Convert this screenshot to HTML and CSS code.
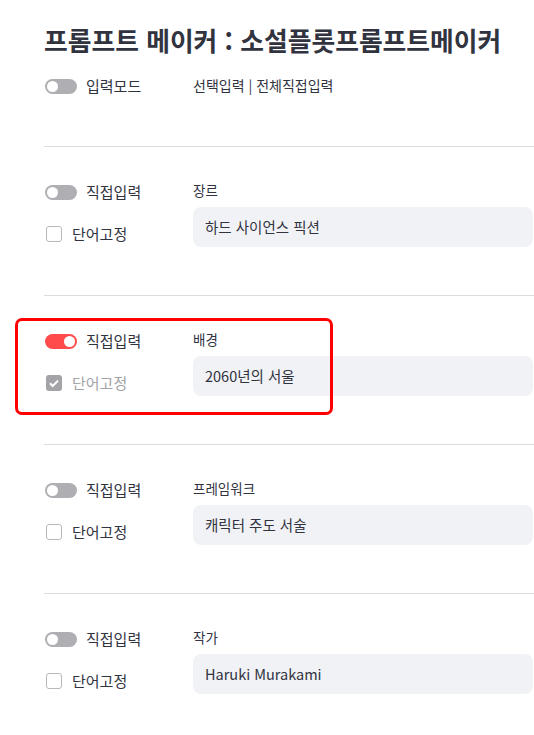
FILE: index.html
```html
<!DOCTYPE html>
<html lang="ko">
<head>
<meta charset="utf-8">
<link rel="stylesheet" href="styles.css">
</head>
<body>
<main class="page">
  <h1 class="title">프롬프트 메이커 : 소설플롯프롬프트메이커</h1>

  <div class="mode-row">
    <div class="left">
      <div class="toggle-line"><span class="toggle"><span class="knob"></span></span><span class="tlabel">입력모드</span></div>
    </div>
    <div class="mode-text">선택입력 | 전체직접입력</div>
  </div>

  <hr class="divider">
  <section class="field">
    <div class="left">
      <div class="toggle-line"><span class="toggle"><span class="knob"></span></span><span class="tlabel">직접입력</span></div>
      <div class="check-line"><span class="checkbox"></span><span class="clabel">단어고정</span></div>
    </div>
    <div class="right">
      <div class="flabel">장르</div>
      <div class="input">하드 사이언스 픽션</div>
    </div>
  </section>

  <hr class="divider">
  <section class="field">
    <div class="highlight"></div>
    <div class="left">
      <div class="toggle-line"><span class="toggle on"><span class="knob"></span></span><span class="tlabel">직접입력</span></div>
      <div class="check-line disabled"><span class="checkbox checked"><svg viewBox="0 0 16 16" width="16" height="16"><path d="M4 8.3l2.7 2.7L12 5.6" fill="none" stroke="#fff" stroke-width="2"/></svg></span><span class="clabel">단어고정</span></div>
    </div>
    <div class="right">
      <div class="flabel">배경</div>
      <div class="input">2060년의 서울</div>
    </div>
  </section>

  <hr class="divider">
  <section class="field">
    <div class="left">
      <div class="toggle-line"><span class="toggle"><span class="knob"></span></span><span class="tlabel">직접입력</span></div>
      <div class="check-line"><span class="checkbox"></span><span class="clabel">단어고정</span></div>
    </div>
    <div class="right">
      <div class="flabel">프레임워크</div>
      <div class="input">캐릭터 주도 서술</div>
    </div>
  </section>

  <hr class="divider">
  <section class="field">
    <div class="left">
      <div class="toggle-line"><span class="toggle"><span class="knob"></span></span><span class="tlabel">직접입력</span></div>
      <div class="check-line"><span class="checkbox"></span><span class="clabel">단어고정</span></div>
    </div>
    <div class="right">
      <div class="flabel">작가</div>
      <div class="input">Haruki Murakami</div>
    </div>
  </section>
</main>
</body>
</html>
```

FILE: styles.css
```css
html, body {
  margin: 0;
  padding: 0;
  background: #ffffff;
  overflow: hidden;
}
body {
  font-family: "Noto Sans CJK KR", "Noto Sans", sans-serif;
  color: #31333f;
  width: 534px;
  height: 735px;
}
.page {
  padding: 0 0 0 44px;
}
.title {
  margin: 0;
  padding-top: 22px;
  font-size: 25.8px;
  line-height: 36px;
  font-weight: 700;
  white-space: nowrap;
}
.mode-row {
  display: grid;
  grid-template-columns: 149px 1fr;
  margin-top: 16px;
  margin-bottom: 52px;
  height: 20px;
  align-items: center;
}
.mode-text {
  font-size: 14px;
  line-height: 20px;
}
.divider {
  border: 0;
  border-top: 1px solid #dcdcdc;
  margin: 0;
  height: 0;
}
.field {
  position: relative;
  display: grid;
  grid-template-columns: 149px 340px;
  padding-top: 33px;
  padding-bottom: 48px;
}
.left {
  display: flex;
  flex-direction: column;
}
.toggle-line {
  display: flex;
  align-items: center;
  height: 20px;
  margin-top: 2px;
}
.toggle {
  position: relative;
  width: 32px;
  height: 15px;
  border-radius: 8px;
  background: #aeaeb3;
  margin-left: 1px;
  flex: none;
}
.toggle .knob {
  position: absolute;
  top: 2px;
  left: 2px;
  width: 11px;
  height: 11px;
  border-radius: 50%;
  background: #fff;
}
.toggle.on {
  background: #ff4b4b;
}
.toggle.on .knob {
  left: 19px;
}
.tlabel {
  margin-left: 9px;
  font-size: 15px;
  line-height: 20px;
}
.check-line {
  display: flex;
  align-items: center;
  height: 20px;
  margin-top: 22px;
}
.checkbox {
  width: 14px;
  height: 14px;
  border: 1px solid #b9b9bd;
  border-radius: 3px;
  margin-left: 2px;
  flex: none;
  background: #fff;
  display: flex;
}
.checkbox.checked {
  width: 16px;
  height: 16px;
  border: 0;
  background: #a3a3a8;
}
.checkbox svg {
  display: block;
}
.clabel {
  margin-left: 10px;
  font-size: 15px;
  line-height: 20px;
}
.disabled .clabel {
  color: #a3a3a8;
}
.flabel {
  font-size: 13.5px;
  line-height: 20px;
  height: 20px;
}
.input {
  margin-top: 7px;
  height: 40px;
  box-sizing: border-box;
  border-radius: 8px;
  background: #f0f2f6;
  padding-left: 12px;
  font-size: 14.5px;
  line-height: 40px;
}
.highlight {
  position: absolute;
  left: -29px;
  top: 22px;
  width: 312px;
  height: 91px;
  border: 3px solid #ff0000;
  border-radius: 7px;
  pointer-events: none;
}
```
